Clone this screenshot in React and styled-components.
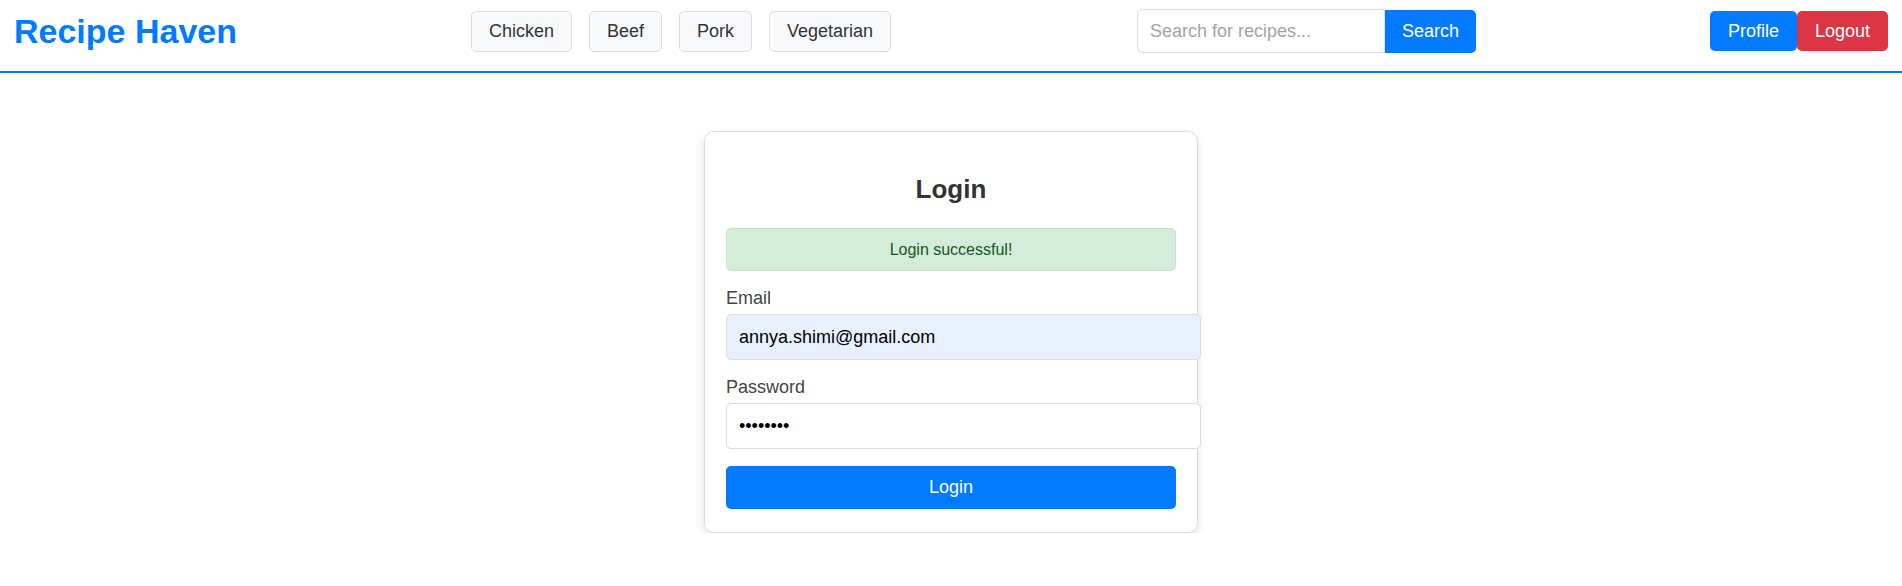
import React from "react";
import styled, { createGlobalStyle } from "styled-components";

const GlobalStyle = createGlobalStyle`
  body {
    margin: 0;
    font-family: "Liberation Sans", Arial, sans-serif;
    background: #fff;
    color: #333;
  }
`;

// header
const Header = styled.header`
  display: flex;
  align-items: center;
  justify-content: space-between;
  padding: 9px 14px 18px;
  border-bottom: 2px solid #007bff;
`;

const Logo = styled.h1`
  margin: 0;
  font-size: 34px;
  font-weight: bold;
  color: #007bff;
  line-height: 39px;
`;

const Categories = styled.nav`
  display: flex;
  gap: 17px;
  margin-right: 12px;
`;

const CategoryButton = styled.button`
  height: 41px;
  padding: 0 17px;
  font-family: inherit;
  font-size: 18px;
  color: #333;
  background: #f8f9fa;
  border: 1px solid #ddd;
  border-radius: 5px;
  cursor: pointer;
`;

const SearchForm = styled.form`
  display: flex;
  align-items: center;
`;

const SearchInput = styled.input`
  box-sizing: border-box;
  width: 248px;
  height: 44px;
  padding: 0 12px;
  font-family: inherit;
  font-size: 18px;
  border: 1px solid #ddd;
  border-radius: 5px 0 0 5px;
  outline: none;

  &::placeholder {
    color: #a3a3a3;
  }
`;

const SearchButton = styled.button`
  height: 43px;
  width: 91px;
  font-family: inherit;
  font-size: 18px;
  color: #fff;
  background: #007bff;
  border: none;
  border-radius: 0 5px 5px 0;
  cursor: pointer;
`;

const UserActions = styled.div`
  display: flex;
  align-items: center;
`;

const ActionButton = styled.button`
  height: 40px;
  padding: 0 18px;
  font-family: inherit;
  font-size: 18px;
  color: #fff;
  background: ${(p) => (p.$danger ? "#dc3545" : "#007bff")};
  border: none;
  border-radius: 5px;
  cursor: pointer;
`;

// login card
const Card = styled.div`
  width: 450px;
  margin: 58px auto 0;
  padding: 21px 21px 23px;
  border: 1px solid #ddd;
  border-radius: 10px;
  box-shadow: 0 4px 10px rgba(0, 0, 0, 0.12);
`;

const Title = styled.h2`
  margin: 21px 0 24px;
  text-align: center;
  font-size: 26px;
  line-height: 30px;
  color: #333;
`;

const Alert = styled.div`
  margin-bottom: 17px;
  padding: 11px;
  font-size: 16px;
  line-height: 19px;
  text-align: center;
  color: #155724;
  background: #d4edda;
  border: 1px solid #c3e6cb;
  border-radius: 5px;
`;

const Field = styled.div`
  margin-bottom: 17px;
`;

const Label = styled.label`
  display: block;
  margin-bottom: 5px;
  font-size: 18px;
  line-height: 21px;
  color: #444;
`;

const Input = styled.input`
  box-sizing: content-box;
  display: block;
  width: 100%;
  height: 44px;
  padding: 0 11px 0 12px;
  font-family: inherit;
  font-size: 18px;
  color: #000;
  background: ${(p) => (p.$filled ? "#e8f0fe" : "#fff")};
  border: 1px solid #ddd;
  border-radius: 5px;
  outline: none;
`;

const SubmitButton = styled.button`
  display: block;
  width: 100%;
  height: 43px;
  font-family: inherit;
  font-size: 18px;
  color: #fff;
  background: #007bff;
  border: none;
  border-radius: 5px;
  cursor: pointer;
`;

const categories = ["Chicken", "Beef", "Pork", "Vegetarian"];

export default function App() {
  return (
    <>
      <GlobalStyle />
      <Header>
        <Logo>Recipe Haven</Logo>
        <Categories>
          {categories.map((c) => (
            <CategoryButton key={c}>{c}</CategoryButton>
          ))}
        </Categories>
        <SearchForm onSubmit={(e) => e.preventDefault()}>
          <SearchInput placeholder="Search for recipes..." />
          <SearchButton type="submit">Search</SearchButton>
        </SearchForm>
        <UserActions>
          <ActionButton>Profile</ActionButton>
          <ActionButton $danger>Logout</ActionButton>
        </UserActions>
      </Header>

      <Card>
        <Title>Login</Title>
        <Alert>Login successful!</Alert>
        <form onSubmit={(e) => e.preventDefault()}>
          <Field>
            <Label htmlFor="email">Email</Label>
            <Input id="email" type="email" $filled defaultValue="annya.shimi@gmail.com" />
          </Field>
          <Field>
            <Label htmlFor="password">Password</Label>
            <Input id="password" type="password" defaultValue="password" />
          </Field>
          <SubmitButton type="submit">Login</SubmitButton>
        </form>
      </Card>
    </>
  );
}
